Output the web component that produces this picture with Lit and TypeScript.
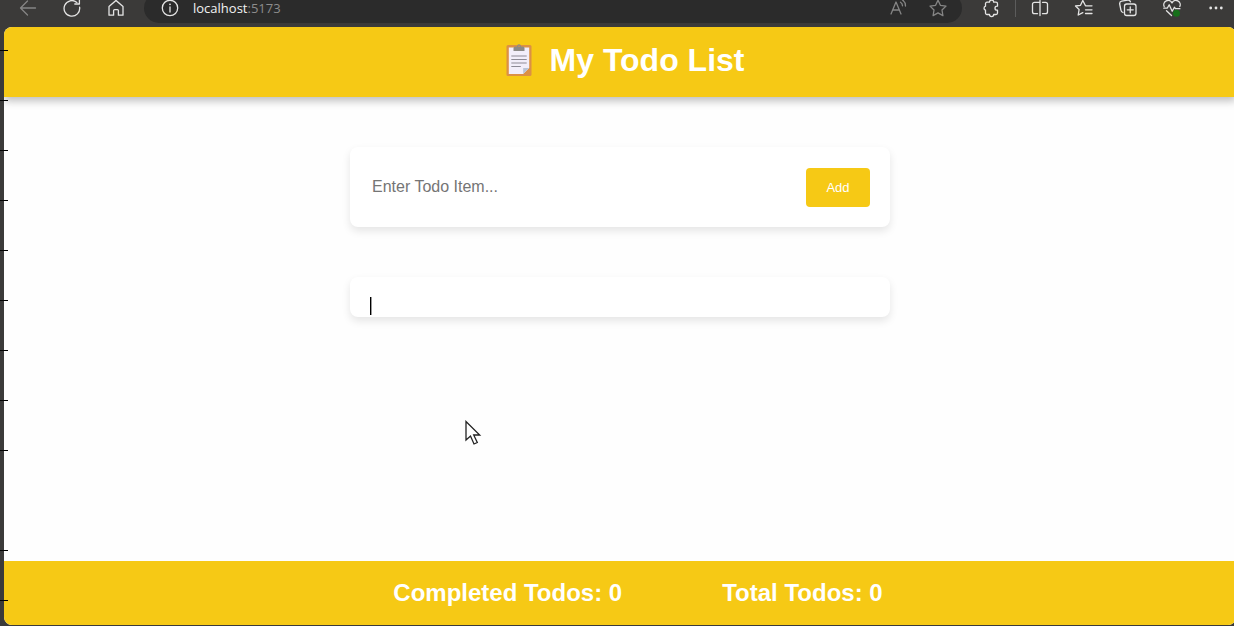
import { LitElement, html, css, svg } from "lit";
import { customElement, state } from "lit/decorators.js";

const icon = (body: unknown) => html`<svg viewBox="0 0 20 20" aria-hidden="true">${body}</svg>`;

const icons = {
  back: icon(svg`<path d="M17.500 10H2.800M9.500 3 2.500 10l7 7"/>`),
  reload: icon(svg`<path d="M17.600 9.200A7.800 7.800 0 1 1 14.900 4.400M17.400 1.400v4.600h-4.600"/>`),
  home: icon(svg`<path d="M3 8.500 10 2.400l7 6.100v8.700h-4.600v-4.600a1 1 0 0 0-1-1H8.600a1 1 0 0 0-1 1v4.600H3z"/>`),
  info: icon(svg`<circle cx="10" cy="10" r="7.700"/><path d="M10 9v5"/><circle class="dot" cx="10" cy="6.300" r=".9"/>`),
  read: icon(svg`<path d="M3 16 8 4l5 12M4.700 12h6.600M12.500 4.200q2 1.200 2 3.600M14.500 2q3 2 3 6"/>`),
  star: icon(svg`<path d="m10 2.200 2.400 5.100 5.600.8-4 3.900.9 5.600-4.900-2.700-4.900 2.700.9-5.600-4-3.900 5.600-.8z"/>`),
  puzzle: icon(svg`<path d="M6 4.200h2.500a2.100 2.100 0 0 1 4.200 0H15a1.500 1.500 0 0 1 1.500 1.500v2.500H16a2 2 0 0 0 0 4h.5v2.800a1.500 1.500 0 0 1-1.500 1.500h-2.300a2.100 2.100 0 0 1-4.200 0H6A1.500 1.500 0 0 1 4.500 15v-2.800a2.100 2.100 0 0 1 0-4V5.700A1.500 1.500 0 0 1 6 4.200z"/>`),
  split: icon(svg`<path d="M10 4.300H4.500a2 2 0 0 0-2 2v7.400a2 2 0 0 0 2 2H7.500M7.500 4.300H7M12.500 4.300h3a2 2 0 0 1 2 2v7.400a2 2 0 0 1-2 2h-3M7.500 4.300H4.500M10 2.500v15"/>`),
  favorites: icon(svg`<path d="M18 7.800h-6.500L8.800 2.500 6.500 7.300l-5 .7 3.600 3.500-.9 5.500 4.600-2.400M11.500 11.800H18M11.500 15.500H18"/>`),
  collections: icon(svg`<path d="M5 14.500A3 3 0 0 1 2.900 12L1.700 6a2.500 2.500 0 0 1 2-2.800l6-1.100a2.500 2.500 0 0 1 2.700 1.700"/><rect x="6.500" y="6" width="11.500" height="11.500" rx="2.200"/><path d="M12.250 8.800v6M9.250 11.800h6"/>`),
  health: icon(svg`<path d="M2.200 8.500a4.200 4.200 0 0 1 7.800-3.600 4.200 4.200 0 0 1 7.800 3.600M1.800 10.200h3.400l2-3.500 3 6.500 2.200-4 1 1.500h4.500M4.500 12.700 9.500 17.500"/><circle class="status" cx="14.500" cy="15.200" r="3.500"/>`),
  more: icon(svg`<g class="dot"><circle cx="4.700" cy="10" r="1.400"/><circle cx="10" cy="10" r="1.400"/><circle cx="15.300" cy="10" r="1.400"/></g>`),
};

@customElement("browser-bar")
class BrowserBar extends LitElement {
  static styles = css`
    :host {
      display: block;
      height: 27px;
      flex: none;
      overflow: hidden;
      color: #e4e4e4;
      font-family: "Open Sans", "Noto Sans", sans-serif;
    }
    .row {
      display: flex;
      align-items: center;
      height: 30px;
      margin-top: -7px;
      padding-left: 10px;
    }
    .group {
      display: flex;
      align-items: center;
      gap: 8px;
    }
    button {
      display: grid;
      place-items: center;
      width: 36px;
      height: 28px;
      padding: 0;
      border: 0;
      background: none;
      color: inherit;
    }
    .dim { color: #858585; }
    svg {
      width: 20px;
      height: 20px;
      fill: none;
      stroke: currentColor;
      stroke-width: 1.3;
      stroke-linejoin: round;
      stroke-linecap: round;
    }
    .dot { fill: currentColor; stroke: none; }
    .status { fill: #16701a; stroke: none; }
    .address {
      flex: 1;
      display: flex;
      align-items: center;
      height: 30px;
      margin: 0 11px 0 10px;
      padding: 0 6px 0 8px;
      border-radius: 15px;
      background: #2b2b2b;
      font-size: 13px;
    }
    .url {
      flex: 1;
      margin-left: 5px;
      color: #f2f2f2;
    }
    .port { color: #8c8c8c; }
    .address .group { gap: 4px; }
    .rule {
      width: 1px;
      height: 18px;
      margin: 0 6px;
      background: #5c5c5c;
    }
  `;

  render() {
    return html`
      <nav class="row" aria-label="Browser">
        <div class="group">
          <button class="dim" aria-label="Back">${icons.back}</button>
          <button aria-label="Refresh">${icons.reload}</button>
          <button aria-label="Home">${icons.home}</button>
        </div>
        <div class="address">
          <button aria-label="Site information">${icons.info}</button>
          <span class="url">localhost<span class="port">:5173</span></span>
          <div class="group dim">
            <button aria-label="Read aloud">${icons.read}</button>
            <button aria-label="Add to favorites">${icons.star}</button>
          </div>
        </div>
        <button aria-label="Extensions">${icons.puzzle}</button>
        <span class="rule"></span>
        <div class="group">
          <button aria-label="Split screen">${icons.split}</button>
          <button aria-label="Favorites">${icons.favorites}</button>
          <button aria-label="Collections">${icons.collections}</button>
          <button aria-label="Browser essentials">${icons.health}</button>
          <button aria-label="More">${icons.more}</button>
        </div>
      </nav>
    `;
  }
}

@customElement("app-root")
class AppRoot extends LitElement {
  @state() private todos: { text: string; done: boolean }[] = [];

  private marks = [50, 100, 150, 200, 250, 300, 350, 400, 450, 550, 600];

  static styles = css`
    :host {
      position: relative;
      display: flex;
      flex-direction: column;
      height: 100vh;
      overflow: hidden;
      background: #3b3a39;
      font-family: "Liberation Sans", Arial, sans-serif;
    }
    .page {
      flex: 1;
      display: flex;
      flex-direction: column;
      margin: 0 -2px 1px 4px;
      border-radius: 8px;
      overflow: hidden;
      background: #fefefe;
    }
    header, footer {
      display: flex;
      align-items: center;
      justify-content: center;
      box-sizing: border-box;
      background: #f6c915;
      color: #fff;
    }
    header {
      height: 70px;
      gap: 14px;
      padding: 0 0 4px 8px;
      box-shadow: 0 4px 8px rgba(0, 0, 0, 0.25);
    }
    .clipboard {
      width: 32px;
      height: 36px;
    }
    h1 {
      margin: 0;
      font-size: 32px;
      line-height: 40px;
    }
    main {
      flex: 1;
      display: flex;
      flex-direction: column;
      align-items: center;
      gap: 50px;
      padding: 50px 20px;
    }
    .card {
      box-sizing: border-box;
      width: 100%;
      max-width: 540px;
      margin: 0;
      padding: 20px;
      border-radius: 8px;
      background: #fff;
      box-shadow: 0 4px 8px rgba(0, 0, 0, 0.1);
    }
    .entry {
      display: flex;
      align-items: center;
      gap: 10px;
    }
    input {
      flex: 1;
      min-width: 0;
      height: 40px;
      padding: 0 2px;
      border: 0;
      outline: 0;
      background: none;
      font: 16px "Liberation Sans", Arial, sans-serif;
    }
    input::placeholder { color: #757575; }
    .add {
      width: 64px;
      height: 39px;
      padding: 0;
      border: 0;
      border-radius: 4px;
      background: #f6c915;
      color: #fff;
      font: 13px "Liberation Sans", Arial, sans-serif;
    }
    .list {
      position: relative;
      list-style: none;
    }
    .caret {
      position: absolute;
      left: 20px;
      top: 20px;
      width: 1px;
      height: 18px;
      background: #000;
      box-shadow: 1px 0 #999;
    }
    footer {
      height: 64px;
      gap: 100px;
      padding-left: 36px;
      font-size: 24px;
      font-weight: bold;
    }
    .pointer {
      position: absolute;
      left: 464px;
      top: 420px;
      width: 18px;
      height: 26px;
    }
    .mark {
      position: absolute;
      left: 0;
      width: 8px;
      height: 1px;
      background: #000;
    }
  `;

  private add(e: Event) {
    e.preventDefault();
    const input = this.renderRoot.querySelector("input") as HTMLInputElement;
    const text = input.value.trim();
    if (!text) return;
    this.todos = [...this.todos, { text, done: false }];
    input.value = "";
  }

  render() {
    return html`
      <browser-bar></browser-bar>
      <div class="page">
        <header>
          <svg class="clipboard" viewBox="0 0 32 36" aria-hidden="true">
            <rect x="2.500" y="3" width="25" height="31" rx="1.500" fill="#dc9045"/>
            <path d="M4.800 5.500h20.400V26l-6 6H4.800z" fill="#f2eefa"/>
            <path d="M19.200 32v-6h6z" fill="#b9c3d6"/>
            <path d="M9.500 9V6Q9.500 4.500 11 4.500h2Q13 2.300 15 2.300t2 2.200H19q1.500 0 1.500 1.500v3z" fill="#8c8a86"/>
            <circle cx="15" cy="4.300" r=".8" fill="#dc9045"/>
            <path d="M7.300 14h15.400M7.300 17.500h15.400M7.300 21h15.400M7.300 24.500h9.500" stroke="#8d8a96" stroke-width="1.200"/>
          </svg>
          <h1>My Todo List</h1>
        </header>
        <main>
          <form class="card entry" @submit=${this.add}>
            <input type="text" aria-label="Todo item" placeholder="Enter Todo Item..." />
            <button class="add" type="submit">Add</button>
          </form>
          <ul class="card list">
            ${this.todos.map((t) => html`<li>${t.text}</li>`)}
            <span class="caret" aria-hidden="true"></span>
          </ul>
        </main>
        <footer>
          <span>Completed Todos: ${this.todos.filter((t) => t.done).length}</span>
          <span>Total Todos: ${this.todos.length}</span>
        </footer>
      </div>
      ${this.marks.map((y) => html`<span class="mark" style="top:${y}px"></span>`)}
      <svg class="pointer" viewBox="0 0 18 26" aria-hidden="true">
        <path d="M2 1.500v18.500l4.500-4 3.500 8 3.300-1.500-3.600-7.500h6z" fill="#fff" stroke="#222" stroke-width="1.300"/>
      </svg>
    `;
  }
}
